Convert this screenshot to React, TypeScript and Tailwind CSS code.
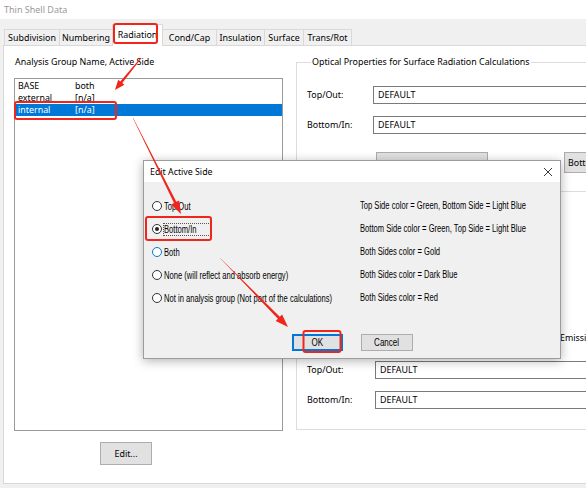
import React from "react";

type Tab = { label: string; cls: string; active?: boolean };

const tabs: Tab[] = [
  { label: "Subdivision", cls: "w-[56px]" },
  { label: "Numbering", cls: "w-[54px] -ml-px" },
  { label: "Radiation", cls: "w-[51px] -ml-px", active: true },
  { label: "Cond/Cap", cls: "w-[55px] -ml-px" },
  { label: "Insulation", cls: "w-[49px] -ml-px" },
  { label: "Surface", cls: "w-[40px] -ml-px" },
  { label: "Trans/Rot", cls: "w-[49px] -ml-px" },
];

function arrowPoints(
  sx: number,
  sy: number,
  tx: number,
  ty: number,
  w0: number,
  w1: number,
  L: number,
  W: number
) {
  const dx = tx - sx;
  const dy = ty - sy;
  const len = Math.hypot(dx, dy);
  const ux = dx / len;
  const uy = dy / len;
  const nx = -uy;
  const ny = ux;
  const bx = tx - ux * L;
  const by = ty - uy * L;
  const pts = [
    [sx + (nx * w0) / 2, sy + (ny * w0) / 2],
    [bx + (nx * w1) / 2, by + (ny * w1) / 2],
    [bx + (nx * W) / 2, by + (ny * W) / 2],
    [tx, ty],
    [bx - (nx * W) / 2, by - (ny * W) / 2],
    [bx - (nx * w1) / 2, by - (ny * w1) / 2],
    [sx - (nx * w0) / 2, sy - (ny * w0) / 2],
  ];
  return pts.map((p) => `${p[0].toFixed(1)},${p[1].toFixed(1)}`).join(" ");
}

function TextBox() {
  return (
    <div className="h-[18px] w-[240px] shrink-0 border border-[#7a7a7a] bg-white flex items-center pl-[4px]">
      DEFAULT
    </div>
  );
}

function Radio({ checked, focus }: { checked?: boolean; focus?: boolean }) {
  return (
    <span
      className={
        focus
          ? "w-[10px] h-[10px] rounded-full border border-[#0078d7] bg-white flex items-center justify-center shrink-0"
          : "w-[10px] h-[10px] rounded-full border border-[#333333] bg-white flex items-center justify-center shrink-0"
      }
    >
      {checked ? <span className="w-[4px] h-[4px] rounded-full bg-[#222222]" /> : null}
    </span>
  );
}

const dlgText = "inline-block origin-left scale-x-[0.76] whitespace-nowrap";

const options = [
  { label: "Top/Out", desc: "Top Side color = Green, Bottom Side = Light Blue" },
  { label: "Bottom/In", desc: "Bottom Side color = Green, Top Side = Light Blue", checked: true },
  { label: "Both", desc: "Both Sides color = Gold", focus: true },
  { label: "None (will reflect and absorb energy)", desc: "Both Sides color = Dark Blue" },
  {
    label: "Not in analysis group (Not part of the calculations)",
    desc: "Both Sides color = Red",
  },
];

export default function App() {
  return (
    <div className="relative w-[586px] h-[488px] overflow-hidden bg-[#f0f0f0] font-['Noto_Sans',sans-serif] text-[8.9px] leading-[12px] text-black">
      {/* window title */}
      <div className="h-[19px] bg-white flex items-center pl-[4px] text-[#9a9a9a] text-[9px]">
        Thin Shell Data
      </div>

      {/* tab strip */}
      <div className="h-[26px] pl-[4px] flex items-end">
        {tabs.map((t) =>
          t.active ? (
            <div
              key={t.label}
              className={`${t.cls} h-[22px] -mb-px relative z-10 bg-white border-t border-l border-r border-[#d9d9d9] flex items-center justify-center pb-[1px]`}
            >
              {t.label}
            </div>
          ) : (
            <div
              key={t.label}
              className={`${t.cls} h-[16px] bg-[#f0f0f0] border-t border-l border-r border-[#d9d9d9] flex items-center justify-center`}
            >
              {t.label}
            </div>
          )
        )}
      </div>

      {/* tab panel */}
      <div className="ml-[3px] w-[600px] h-[439px] bg-white border border-[#d9d9d9] flex">
        {/* left column */}
        <div className="ml-[10px] w-[269px] shrink-0 pt-[10px] flex flex-col">
          <div className="h-[12px] pl-[1px]">Analysis Group Name, Active Side</div>
          <div className="mt-[10px] h-[353px] border border-[#9a9a9a] pt-[1px] flex flex-col">
            <div className="h-[12px] flex items-center pl-[3px]">
              <span className="w-[57px]">BASE</span>
              <span>both</span>
            </div>
            <div className="h-[12px] flex items-center pl-[3px]">
              <span className="w-[57px]">external</span>
              <span>[n/a]</span>
            </div>
            <div className="h-[12px] flex items-center pl-[3px] bg-[#0078d7] text-white">
              <span className="w-[57px]">internal</span>
              <span>[n/a]</span>
            </div>
          </div>
          <div className="mt-[11px] ml-[86px] w-[52px] h-[23px] bg-[#e1e1e1] border border-[#adadad] flex items-center justify-center">
            Edit...
          </div>
        </div>

        {/* right column */}
        <div className="ml-[13px] w-[300px] shrink-0 pt-[10px] flex flex-col">
          <fieldset className="border border-[#dcdcdc] pl-[10px] pb-[18px]">
            <legend className="ml-[4px] px-[1px] leading-[12px]">
              Optical Properties for Surface Radiation Calculations
            </legend>
            <div className="mt-[18px] flex items-center">
              <span className="w-[66px] shrink-0">Top/Out:</span>
              <TextBox />
            </div>
            <div className="mt-[12px] flex items-center">
              <span className="w-[66px] shrink-0">Bottom/In:</span>
              <TextBox />
            </div>
            <div className="mt-[18px] flex items-center">
              <div className="ml-[69px] w-[112px] h-[21px] shrink-0 bg-[#e1e1e1] border border-[#adadad]" />
              <div className="ml-[76px] w-[60px] h-[21px] shrink-0 bg-[#e1e1e1] border border-[#adadad] flex items-center pl-[3px]">
                Bottom...
              </div>
            </div>
          </fieldset>

          <fieldset className="mt-[140px] border border-[#dcdcdc] pl-[10px] pb-[20px]">
            <legend className="ml-[252px] px-[1px] leading-[12px]">Emissivity</legend>
            <div className="mt-[17px] flex items-center">
              <span className="w-[68px] shrink-0">Top/Out:</span>
              <TextBox />
            </div>
            <div className="mt-[12px] flex items-center">
              <span className="w-[68px] shrink-0">Bottom/In:</span>
              <TextBox />
            </div>
          </fieldset>
        </div>
      </div>

      {/* modal dialog */}
      <div className="absolute left-[143px] top-[160px] w-[418px] h-[199px] bg-[#f0f0f0] border border-[#9c9c9c] shadow-[0_2px_10px_rgba(0,0,0,0.3)] flex flex-col z-20">
        <div className="h-[21px] bg-white flex items-center justify-between pl-[6px] pr-[6px] shrink-0">
          <span className="text-[8.8px]">Edit Active Side</span>
          <svg width="10" height="10" viewBox="0 0 10 10" className="mr-[1px]">
            <path d="M1 1 L9 9 M9 1 L1 9" stroke="#222" strokeWidth="0.9" fill="none" />
          </svg>
        </div>
        <div className="pt-[16px] pl-[8px] flex flex-col gap-[7px] font-['Liberation_Sans',sans-serif] text-[10px]">
          {options.map((o) => (
            <div key={o.label} className="h-[16px] flex items-center">
              <div className="w-[208px] shrink-0 flex items-center">
                <Radio checked={o.checked} focus={o.focus} />
                <span
                  className={
                    o.checked
                      ? "ml-[2px] w-[46px] outline outline-1 outline-dotted outline-[#555] leading-[11px]"
                      : "ml-[2px] leading-[11px]"
                  }
                >
                  <span className={dlgText}>{o.label}</span>
                </span>
              </div>
              <span className={dlgText}>{o.desc}</span>
            </div>
          ))}
          <div className="mt-[21px] pl-[140px] flex items-center gap-[18px]">
            <div className="w-[51px] h-[17px] bg-[#e1e1e1] border border-[#0078d7] shadow-[inset_0_0_0_1px_#0078d7] flex items-center justify-center">
              <span className="inline-block scale-x-[0.8]">OK</span>
            </div>
            <div className="w-[52px] h-[17px] bg-[#e1e1e1] border border-[#adadad] flex items-center justify-center">
              <span className="inline-block scale-x-[0.8]">Cancel</span>
            </div>
          </div>
        </div>
      </div>

      {/* red annotations */}
      <svg
        className="absolute left-0 top-0 z-30 pointer-events-none"
        width="586"
        height="488"
        viewBox="0 0 586 488"
      >
        <g fill="none" stroke="#f0261c" strokeWidth="2">
          <rect x="114" y="24" width="43" height="19" rx="2" />
          <rect x="15" y="102" width="101" height="17" rx="2" />
          <rect x="146" y="217" width="65" height="23" rx="2" />
          <rect x="303.5" y="331" width="37" height="21" rx="2" />
        </g>
        <g fill="#f0261c">
          <polygon points={arrowPoints(141, 58, 115, 90, 1, 2.6, 10, 8)} />
          <polygon points={arrowPoints(133, 118, 181, 214, 0.4, 2.6, 13, 9)} />
          <polygon points={arrowPoints(220, 258, 288, 327, 0.3, 2.6, 13, 9)} />
        </g>
      </svg>
    </div>
  );
}
